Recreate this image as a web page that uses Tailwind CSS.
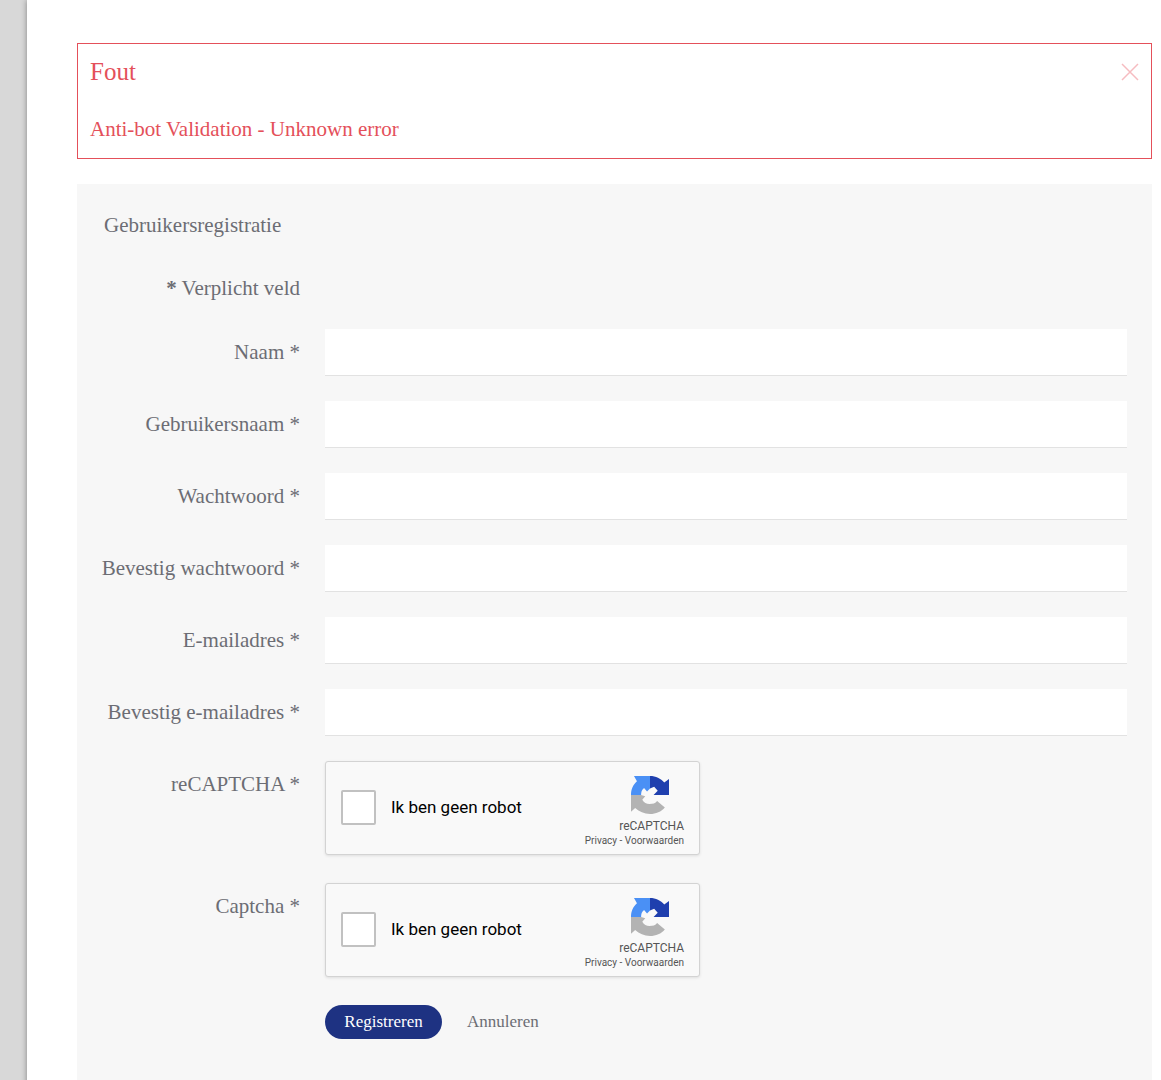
<!DOCTYPE html>
<html lang="nl">
<head>
    <meta charset="UTF-8">
    <meta name="viewport" content="width=device-width, initial-scale=1">
    <title>Gebruikersregistratie</title>
    <script src="https://cdn.jsdelivr.net/npm/@tailwindcss/browser@4"></script>
</head>
<body class="min-h-screen bg-[#d8d8d8] pl-[27px] font-['Liberation_Serif',serif] text-[21px] leading-[26px] text-[#6c6d74]">
    <!-- Logo shared by both captcha widgets -->
    <svg class="absolute h-0 w-0" aria-hidden="true">
        <symbol id="recaptcha-logo" viewBox="0 0 64 64">
            <path fill="#4a90f5" d="M5 0H32V21L27 26L22 20C18 23 17 27 17 32H0C0 23 3 15 10 9Z"/>
            <path fill="#1f3fae" d="M32 0C42 0 50 4 56 11L64 5V32H38L45 25L39 18L32 21Z"/>
            <path fill="#b3b3b3" d="M0 32H17L24 34L19 40C22 45 26 47 31 47C37 47 41 46 44 42L57 53C51 60 42 64 32 64C22 64 14 60 7 54L0 60Z"/>
        </symbol>
    </svg>

    <main class="min-h-screen bg-white pt-[43px] pr-[9px] pl-[50px] shadow-[0_0_6px_rgba(0,0,0,0.4)]">
        <!-- Error message -->
        <div role="alert" class="border border-[#e4505a] px-3 pt-[15px] pb-[17px] text-[#e4505a]">
            <div class="flex items-center justify-between">
                <h4 class="text-[25px]">Fout</h4>
                <button type="button" aria-label="Sluiten" class="text-[#f6bcc0]">
                    <svg class="h-[18px] w-[18px]" viewBox="0 0 18 18" fill="none" stroke="currentColor" stroke-width="1.5"><path d="M1 1l16 16M17 1L1 17"/></svg>
                </button>
            </div>
            <p class="mt-8 leading-[24px]">Anti-bot Validation - Unknown error</p>
        </div>

        <!-- Registration form -->
        <form class="mt-[25px] bg-[#f7f7f7] px-[25px] pt-7 pb-12">
            <fieldset>
                <legend class="pl-[2px]">Gebruikersregistratie</legend>
                <div class="mt-[25px] grid grid-cols-[198px_minmax(0,1fr)] gap-[25px]">
                    <span class="h-[41px] pt-[12px] text-right"><span class="font-bold">*</span> Verplicht veld</span>
                    <span></span>

                    <label for="name" class="pt-[10px] text-right whitespace-nowrap">Naam *</label>
                    <input id="name" type="text" class="h-[47px] w-full border-b border-[#e2e2e2] bg-white px-3 outline-none">

                    <label for="username" class="pt-[10px] text-right whitespace-nowrap">Gebruikersnaam *</label>
                    <input id="username" type="text" class="h-[47px] w-full border-b border-[#e2e2e2] bg-white px-3 outline-none">

                    <label for="password" class="pt-[10px] text-right whitespace-nowrap">Wachtwoord *</label>
                    <input id="password" type="password" class="h-[47px] w-full border-b border-[#e2e2e2] bg-white px-3 outline-none">

                    <label for="password2" class="-ml-2 pt-[10px] text-right whitespace-nowrap">Bevestig wachtwoord *</label>
                    <input id="password2" type="password" class="h-[47px] w-full border-b border-[#e2e2e2] bg-white px-3 outline-none">

                    <label for="email" class="pt-[10px] text-right whitespace-nowrap">E-mailadres *</label>
                    <input id="email" type="email" class="h-[47px] w-full border-b border-[#e2e2e2] bg-white px-3 outline-none">

                    <label for="email2" class="pt-[10px] text-right whitespace-nowrap">Bevestig e-mailadres *</label>
                    <input id="email2" type="email" class="h-[47px] w-full border-b border-[#e2e2e2] bg-white px-3 outline-none">

                    <span class="pt-[10px] text-right">reCAPTCHA *</span>
                    <div class="mb-[3px] flex w-full max-w-[375px] items-center justify-between rounded-[3px] border border-[#d3d3d3] bg-[#f9f9f9] px-[15px] pt-3 pb-[6px] font-[Roboto,sans-serif] shadow-[0_1px_3px_rgba(0,0,0,0.1)]">
                        <label for="robot1" class="flex items-center gap-[15px] pb-[8px] text-[17px] text-black">
                            <input id="robot1" type="checkbox" class="h-[35px] w-[35px] appearance-none rounded-[2px] border-2 border-[#c1c1c1] bg-white">
                            Ik ben geen robot
                        </label>
                        <div class="flex flex-col items-end text-[#555]">
                            <svg class="mt-[2px] mr-[15px] h-[38px] w-[38px]"><use href="#recaptcha-logo"/></svg>
                            <span class="mt-[4px] text-[12px] leading-[16px]">reCAPTCHA</span>
                            <span class="text-[10px] leading-[14px]"><a href="#">Privacy</a> - <a href="#">Voorwaarden</a></span>
                        </div>
                    </div>

                    <span class="pt-[10px] text-right">Captcha *</span>
                    <div class="mb-[3px] flex w-full max-w-[375px] items-center justify-between rounded-[3px] border border-[#d3d3d3] bg-[#f9f9f9] px-[15px] pt-3 pb-[6px] font-[Roboto,sans-serif] shadow-[0_1px_3px_rgba(0,0,0,0.1)]">
                        <label for="robot2" class="flex items-center gap-[15px] pb-[8px] text-[17px] text-black">
                            <input id="robot2" type="checkbox" class="h-[35px] w-[35px] appearance-none rounded-[2px] border-2 border-[#c1c1c1] bg-white">
                            Ik ben geen robot
                        </label>
                        <div class="flex flex-col items-end text-[#555]">
                            <svg class="mt-[2px] mr-[15px] h-[38px] w-[38px]"><use href="#recaptcha-logo"/></svg>
                            <span class="mt-[4px] text-[12px] leading-[16px]">reCAPTCHA</span>
                            <span class="text-[10px] leading-[14px]"><a href="#">Privacy</a> - <a href="#">Voorwaarden</a></span>
                        </div>
                    </div>

                    <div class="col-start-2 flex items-center gap-[25px] text-[17px]">
                        <button type="submit" class="h-[34px] w-[117px] rounded-full bg-[#1e3282] text-white">Registreren</button>
                        <a href="#">Annuleren</a>
                    </div>
                </div>
            </fieldset>
        </form>
    </main>
</body>
</html>
